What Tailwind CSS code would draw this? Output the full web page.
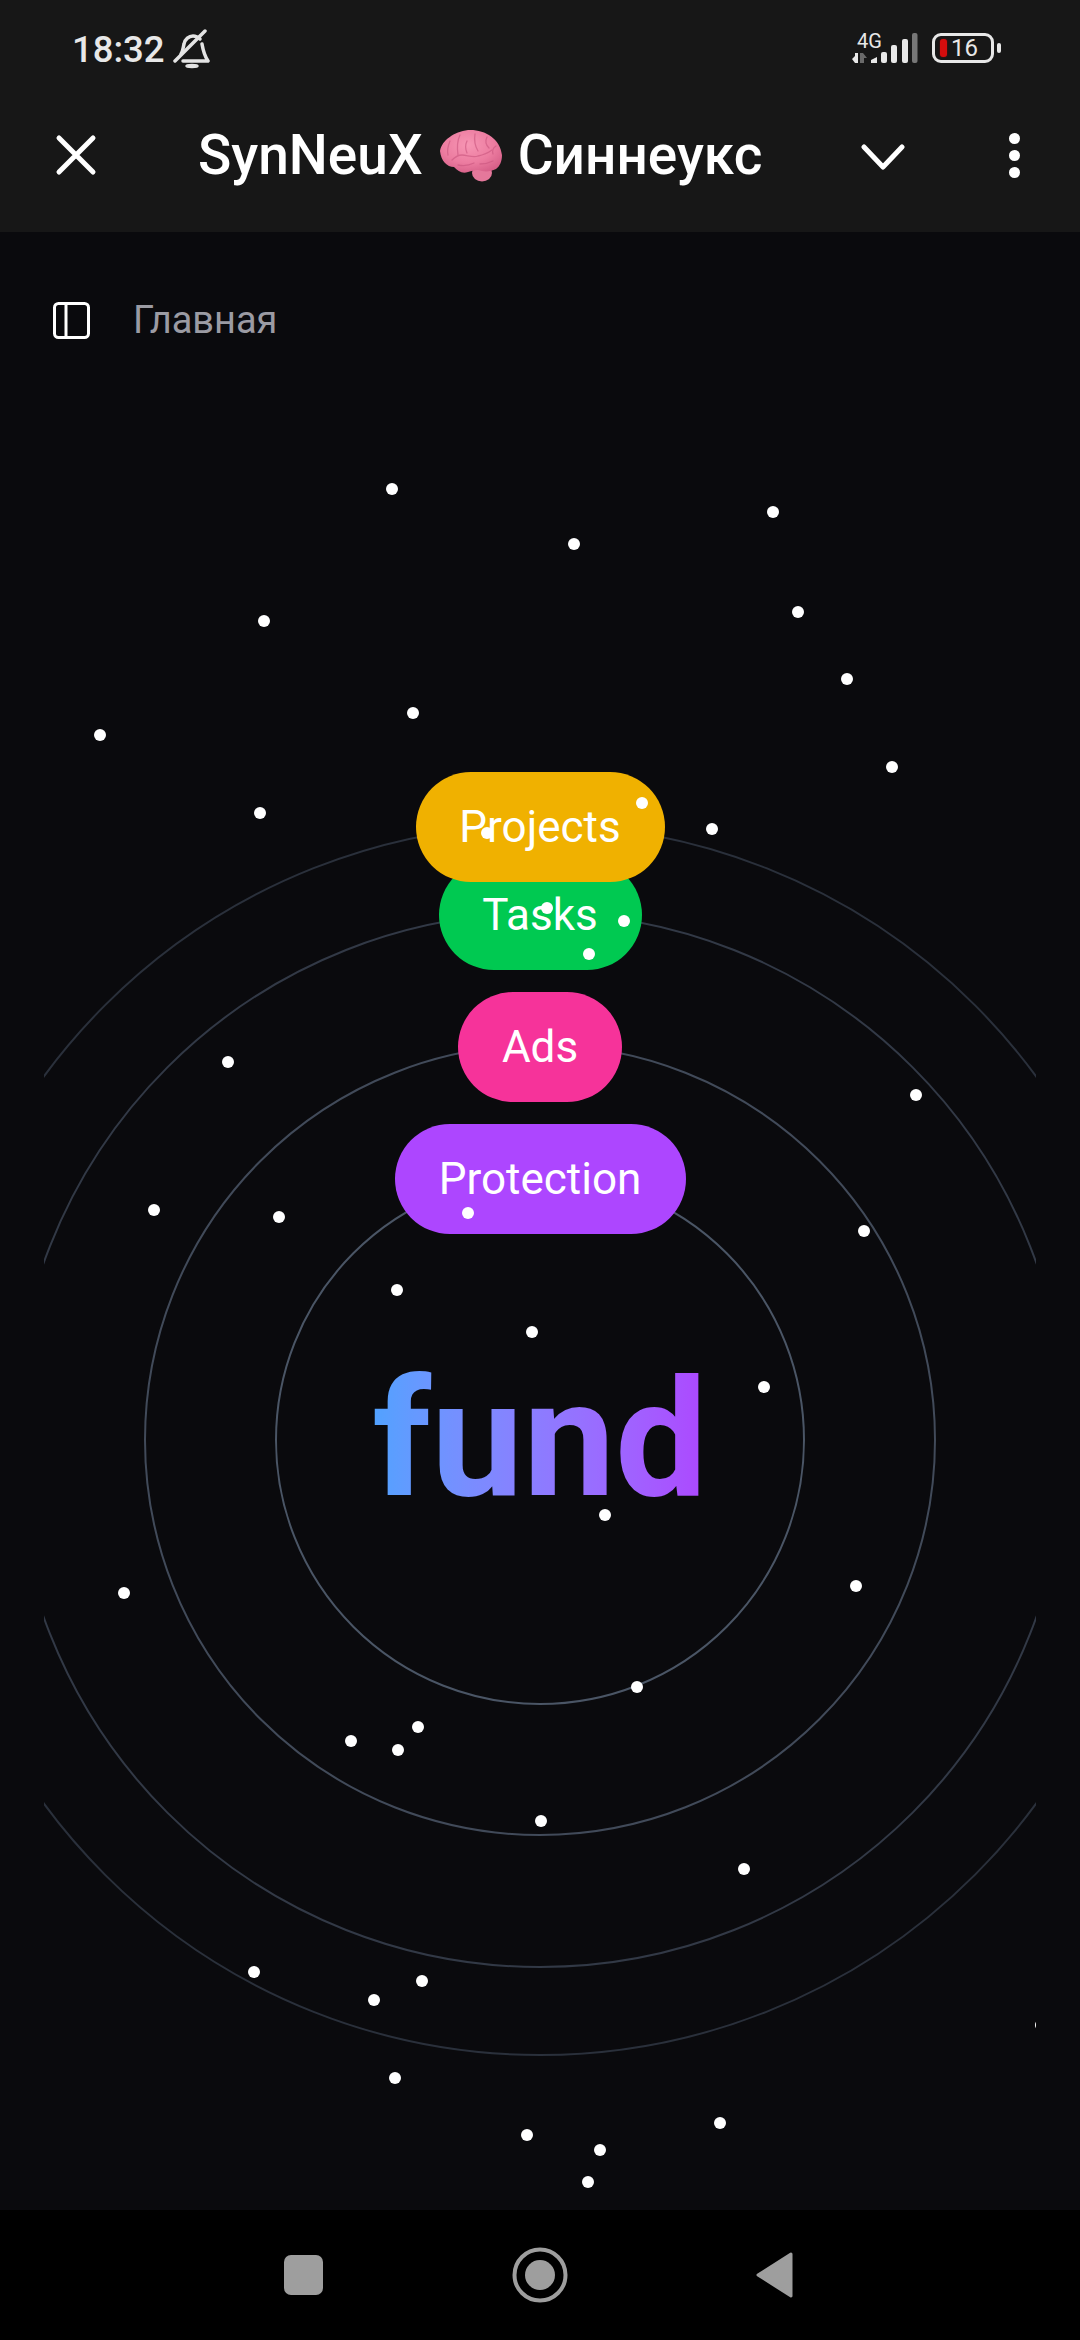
<!DOCTYPE html>
<html lang="ru">

<head>
  <meta charset="UTF-8">
  <meta name="viewport" content="width=device-width, initial-scale=1.0">
  <script src="https://cdn.jsdelivr.net/npm/@tailwindcss/browser@4"></script>
  <title>SynNeuX</title>
</head>

<body class="w-[1080px] h-[2340px] flex flex-col overflow-hidden bg-[#0a0a0d] font-['Roboto',sans-serif]">

  <!-- top bar -->
  <header class="bg-[#171717] h-[232px] shrink-0">
    <div class="h-[78px] pt-[22px] flex items-center text-[#e8e8e8]">
      <span class="ml-[72px] text-[36.500px] leading-[56px] font-medium">18:32</span>
      <svg class="ml-[7px] mt-[-2px]" width="38" height="40" viewBox="0 0 38 40" fill="none" stroke="#e4e4e4" stroke-width="3.500" stroke-linecap="round" stroke-linejoin="round">
        <path d="M9 25c2-3 2-6 3-10 1-5 5-8 9-8 3 0 5 1 7 3" />
        <path d="M30 15c1 6 2 11 6 17H11" />
        <path d="M33 2 3 32" />
        <ellipse cx="20" cy="37" rx="6" ry="1.500" fill="#e4e4e4" stroke-width="1.500" />
      </svg>
      <div class="ml-auto flex items-center">
        <div class="relative w-[66px] h-[32px] mt-[-2px]">
          <span class="absolute left-[5px] top-[-2px] text-[20px] leading-[20px] text-[#e8e8e8]">4G</span>
          <svg class="absolute left-0 top-0" width="66" height="32" viewBox="0 0 66 32">
            <path d="M0 26l3-3v-3h3v10H3z" fill="#e8e8e8" />
            <path d="M8 30V20h3l4 5h-3v5z" fill="#6a6a6a" />
            <path d="M19 30v-3l6-3v6z" fill="#e8e8e8" />
            <rect x="29" y="19" width="6" height="11" rx="2" fill="#e8e8e8" />
            <rect x="39" y="12" width="6" height="18" rx="2" fill="#e8e8e8" />
            <rect x="50" y="6" width="6" height="24" rx="2" fill="#e8e8e8" />
            <rect x="60" y="0" width="5.500" height="30" rx="2" fill="#777" />
          </svg>
        </div>
        <div class="ml-[14px] mt-[-4px] relative w-[62px] h-[30px] border-[3px] border-[#e8e8e8] rounded-[9px]">
          <div class="absolute left-[5px] top-[3px] bottom-[3px] w-[7px] rounded-[3px] bg-[#d40d0d] shadow-[0_0_2px_#7a0808]"></div>
          <span class="absolute left-[16px] top-[-3px] text-[24px] leading-[30px] text-[#e8e8e8]">16</span>
        </div>
        <div class="ml-[3px] mr-[79px] mt-[-4px] w-[4px] h-[10px] rounded-full bg-[#e8e8e8]"></div>
      </div>
    </div>
    <div class="h-[154px] flex items-center text-white">
      <svg class="ml-[55px]" width="42" height="42" viewBox="0 0 42 42" fill="none" stroke="#fff" stroke-width="5" stroke-linecap="round">
        <path d="M4 4l34 34M38 4 4 38" />
      </svg>
      <h1 class="ml-[101px] flex items-center text-[55px] leading-[64px] font-medium whitespace-nowrap">
        <span>SynNeuX</span>
        <svg class="mx-[15px] blur-[0.5px]" width="65" height="54" viewBox="0 0 65 54">
          <defs>
            <radialGradient id="brainFill" cx="45%" cy="35%" r="70%">
              <stop offset="0" stop-color="#f796b4" />
              <stop offset="0.6" stop-color="#ec7ca0" />
              <stop offset="1" stop-color="#d65f88" />
            </radialGradient>
          </defs>
          <ellipse cx="44" cy="45" rx="10" ry="8.500" fill="#e5789b" />
          <path d="M2 23C4 12 16 4 30 2 46 1 62 10 64 27 64 33 62 38 58 41 52 44 46 44 40 42 36 42 34 43 30 44 24 46 20 43 16 39 9 39 3 33 2 23Z" fill="url(#brainFill)" />
          <g fill="none" stroke="#c9557e" stroke-width="1.300" stroke-linecap="round" opacity="0.6">
            <path d="M14 32c3-3 6-5 10-5 5 0 11 3 16 1 5-1 10-3 14-6" />
            <path d="M22 7c-3 6-3 13-2 20M37 6c-1 6 0 12 3 17M12 13c-2 5-3 10-2 14" />
            <path d="M49 9c-2 4-1 8 2 11M58 18c-3 2-4 5-3 8M29 13c-2 4-2 7 0 12" />
            <path d="M20 37c5 1 12 0 16-2M42 36c4 0 9-1 13-3" />
          </g>
        </svg>
        <span>Синнеукс</span>
      </h1>
      <svg class="ml-[98px] mt-[4px]" width="44" height="28" viewBox="0 0 44 28" fill="none" stroke="#fff" stroke-width="5" stroke-linecap="round" stroke-linejoin="round">
        <path d="M3 4l19 20L41 4" />
      </svg>
      <div class="ml-[104px] flex flex-col gap-[6px]">
        <div class="w-[11px] h-[11px] rounded-full bg-white"></div>
        <div class="w-[11px] h-[11px] rounded-full bg-white"></div>
        <div class="w-[11px] h-[11px] rounded-full bg-white"></div>
      </div>
    </div>
  </header>

  <!-- main -->
  <main class="relative flex-1">
    <div class="absolute left-[53px] top-[68px] flex items-center gap-[43px]">
      <svg width="37" height="37" viewBox="0 0 37 37" fill="none" stroke="#fff" stroke-width="3">
        <rect x="1.500" y="1.500" width="34" height="34" rx="4" />
        <path d="M13 2v33" />
      </svg>
      <span class="text-[38px] leading-[40px] text-[#9b9ba3]">Главная</span>
    </div>

    <!-- rings -->
    <svg class="absolute left-[44px] top-0" width="992" height="1978" viewBox="44 232 992 1978" fill="none">
      <circle cx="540" cy="1440" r="264" stroke="#4a5565" stroke-width="2" />
      <circle cx="540" cy="1440" r="395" stroke="#414a59" stroke-width="2" />
      <circle cx="540" cy="1440" r="527" stroke="#323946" stroke-width="2" />
      <circle cx="540" cy="1440" r="615" stroke="#2a303b" stroke-width="2" />
    </svg>

    <!-- pills and title -->
    <div class="absolute inset-x-0 top-[540px] flex flex-col items-center text-white text-[44px] leading-[52px]">
      <div class="relative z-10 w-[249px] h-[110px] rounded-full bg-yellow-500 flex items-center justify-center">Projects</div>
      <div class="-mt-[22px] w-[203px] h-[110px] rounded-full bg-green-500 flex items-center justify-center">Tasks</div>
      <div class="mt-[22px] w-[164px] h-[110px] rounded-full bg-pink-500 flex items-center justify-center">Ads</div>
      <div class="mt-[22px] w-[291px] h-[110px] rounded-full bg-purple-500 flex items-center justify-center">Protection</div>
      <div class="mt-[105px] text-[164px] leading-[200px] font-bold bg-linear-to-r from-blue-400 to-purple-500 bg-clip-text text-transparent">fund</div>
    </div>

    <!-- particles -->
    <svg class="absolute left-[44px] top-0 z-20" width="992" height="1978" viewBox="44 232 992 1978" fill="#fff">
      <circle cx="392" cy="489" r="6" />
      <circle cx="574" cy="544" r="6" />
      <circle cx="773" cy="512" r="6" />
      <circle cx="264" cy="621" r="6" />
      <circle cx="798" cy="612" r="6" />
      <circle cx="847" cy="679" r="6" />
      <circle cx="413" cy="713" r="6" />
      <circle cx="100" cy="735" r="6" />
      <circle cx="892" cy="767" r="6" />
      <circle cx="260" cy="813" r="6" />
      <circle cx="642" cy="803" r="6" />
      <circle cx="712" cy="829" r="6" />
      <circle cx="487" cy="833" r="6" />
      <circle cx="547" cy="908" r="6" />
      <circle cx="624" cy="921" r="6" />
      <circle cx="589" cy="954" r="6" />
      <circle cx="228" cy="1062" r="6" />
      <circle cx="916" cy="1095" r="6" />
      <circle cx="154" cy="1210" r="6" />
      <circle cx="279" cy="1217" r="6" />
      <circle cx="468" cy="1213" r="6" />
      <circle cx="864" cy="1231" r="6" />
      <circle cx="397" cy="1290" r="6" />
      <circle cx="532" cy="1332" r="6" />
      <circle cx="764" cy="1387" r="6" />
      <circle cx="605" cy="1515" r="6" />
      <circle cx="124" cy="1593" r="6" />
      <circle cx="856" cy="1586" r="6" />
      <circle cx="637" cy="1687" r="6" />
      <circle cx="351" cy="1741" r="6" />
      <circle cx="398" cy="1750" r="6" />
      <circle cx="418" cy="1727" r="6" />
      <circle cx="541" cy="1821" r="6" />
      <circle cx="744" cy="1869" r="6" />
      <circle cx="254" cy="1972" r="6" />
      <circle cx="374" cy="2000" r="6" />
      <circle cx="422" cy="1981" r="6" />
      <circle cx="1041" cy="2025" r="6" />
      <circle cx="395" cy="2078" r="6" />
      <circle cx="527" cy="2135" r="6" />
      <circle cx="600" cy="2150" r="6" />
      <circle cx="588" cy="2182" r="6" />
      <circle cx="720" cy="2123" r="6" />
    </svg>
  </main>

  <!-- android nav -->
  <nav class="h-[130px] shrink-0 bg-black relative flex items-center justify-center">
    <div class="absolute left-[284px] top-[45px] w-[39px] h-[40px] rounded-[7px] bg-[#9e9e9e]"></div>
    <svg width="56" height="56" viewBox="0 0 56 56">
      <circle cx="28" cy="28" r="25.500" fill="none" stroke="#9e9e9e" stroke-width="4" />
      <circle cx="28" cy="28" r="15" fill="#9e9e9e" />
    </svg>
    <svg class="absolute left-[755px] top-[41px]" width="39" height="48" viewBox="0 0 39 48">
      <path d="M36 3 3 24l33 21z" fill="#9e9e9e" stroke="#9e9e9e" stroke-width="3" stroke-linejoin="round" />
    </svg>
  </nav>

</body>

</html>
